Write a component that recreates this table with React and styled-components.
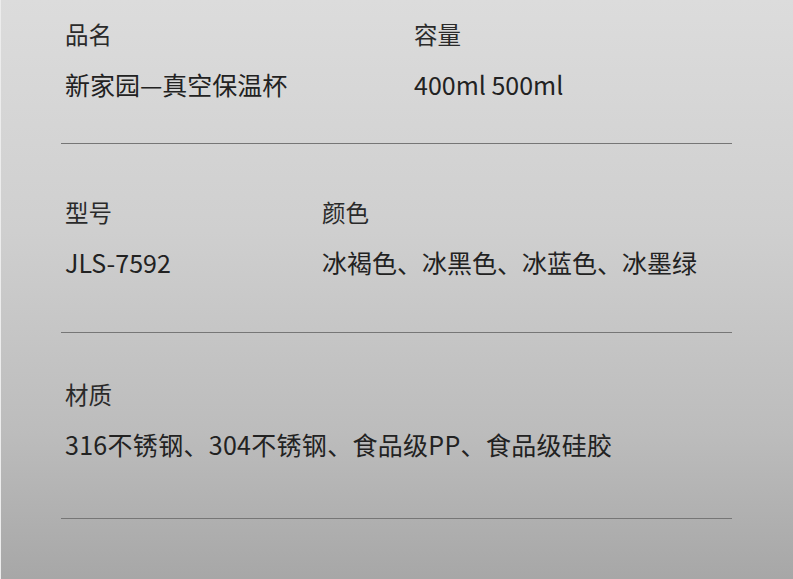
import React from "react";
import styled, { createGlobalStyle } from "styled-components";

const GlobalStyle = createGlobalStyle`
  html, body {
    margin: 0;
    padding: 0;
  }
  body {
    font-family: "Noto Sans CJK SC", "Noto Sans", sans-serif;
  }
`;

const rows = [
  {
    cols: [
      { label: "品名", value: "新家园—真空保温杯", width: 349 },
      { label: "容量", value: "400ml 500ml" },
    ],
    top: 19,
    bottom: 44,
  },
  {
    cols: [
      { label: "型号", value: "JLS-7592", width: 257 },
      { label: "颜色", value: "冰褐色、冰黑色、冰蓝色、冰墨绿" },
    ],
    top: 53,
    bottom: 55,
  },
  {
    cols: [{ label: "材质", value: "316不锈钢、304不锈钢、食品级PP、食品级硅胶", narrow: true }],
    top: 46,
    bottom: 59,
  },
];

export default function App() {
  return (
    <Page>
      <GlobalStyle />
      <Sheet>
        {rows.map((row, i) => (
          <Section key={i} $top={row.top} $bottom={row.bottom}>
            {row.cols.map((col) => (
              <Field key={col.label} $width={col.width}>
                <Label>{col.label}</Label>
                <Value $narrow={col.narrow}>{col.value}</Value>
              </Field>
            ))}
          </Section>
        ))}
      </Sheet>
    </Page>
  );
}

const Page = styled.div`
  width: 793px;
  height: 579px;
  overflow: hidden;
  background: linear-gradient(180deg, #dcdcdc 0%, #cfcfcf 40%, #bcbcbc 75%, #a7a7a7 100%);
  border-left: 1px solid #ececec;
  box-sizing: border-box;
`;

const Sheet = styled.div`
  margin-left: 60px;
  width: 671px;
`;

const Section = styled.div`
  display: flex;
  padding: ${(p) => p.$top}px 0 ${(p) => p.$bottom}px 4px;
  border-bottom: 1px solid #767676;
`;

const Field = styled.div`
  display: flex;
  flex-direction: column;
  gap: 20px;
  ${(p) => (p.$width ? `width: ${p.$width}px; flex: none;` : "flex: 1;")}
`;

const Label = styled.div`
  font-size: 23.5px;
  line-height: 30px;
  color: #2a2a2a;
`;

const Value = styled.div`
  font-size: 25px;
  line-height: 30px;
  color: #222;
  white-space: nowrap;
  letter-spacing: ${(p) => (p.$narrow ? "0.3px" : "0")};
`;
